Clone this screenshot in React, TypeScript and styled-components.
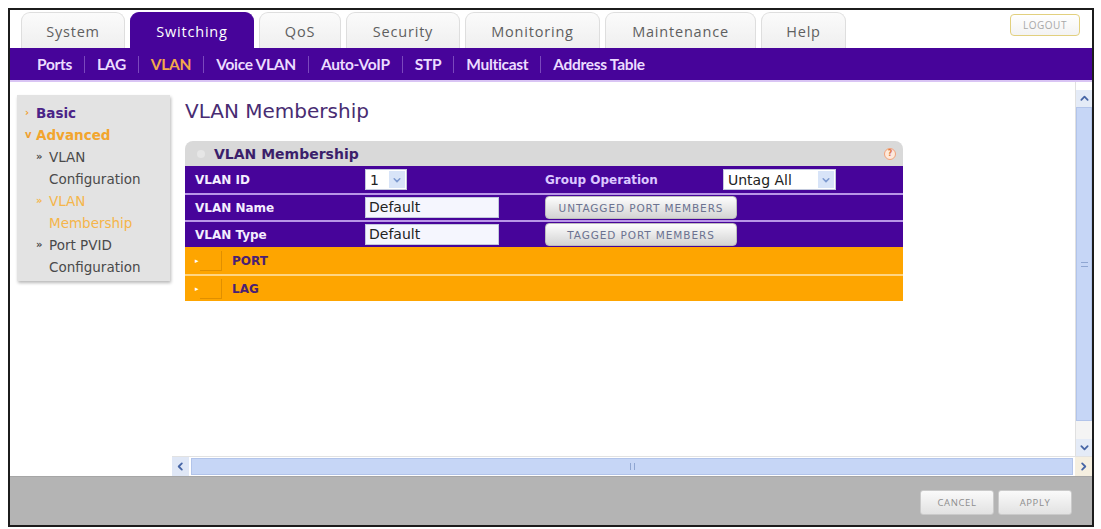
import React from 'react';
import styled, { createGlobalStyle } from 'styled-components';

const PURPLE = '#47049a';
const ORANGE = '#fea500';

const GlobalStyle = createGlobalStyle`
  html, body { margin: 0; padding: 0; background: #fff; }
  body { font-family: "DejaVu Sans", Verdana, sans-serif; }
  * { box-sizing: border-box; }
`;

const Frame = styled.div`
  margin: 8px 0 0 8px;
  width: 1086px;
  height: 519px;
  border: 2px solid #1c1c1c;
  display: flex;
  flex-direction: column;
  background: #fff;
`;

/* top tabs */
const TopBar = styled.div`
  height: 38px;
  display: flex;
  align-items: flex-end;
  gap: 5px;
  padding: 0 12px 0 11px;
`;

const Tab = styled.div<{ $w: number; $active?: boolean }>`
  width: ${p => p.$w}px;
  height: 36px;
  display: flex;
  align-items: center;
  justify-content: center;
  border-radius: 9px 9px 0 0;
  border: 1px solid ${p => (p.$active ? PURPLE : '#dedede')};
  border-bottom: none;
  background: ${p => (p.$active ? PURPLE : 'linear-gradient(#fbfbfb, #efefef)')};
  color: ${p => (p.$active ? '#fff' : '#5f5f5f')};
  font-family: "Open Sans", sans-serif;
  font-size: 14.5px;
  letter-spacing: 0.8px;
  padding-top: 2px;
`;

const Logout = styled.div`
  margin-left: auto;
  align-self: flex-start;
  margin-top: 4px;
  width: 70px;
  height: 22px;
  border: 1px solid #e2d07e;
  border-radius: 4px;
  background: linear-gradient(#ffffff, #f3f3f3);
  color: #a8a8a8;
  font-family: "Open Sans", sans-serif;
  font-size: 10px;
  letter-spacing: 0.5px;
  display: flex;
  align-items: center;
  justify-content: center;
`;

/* sub navigation */
const SubNav = styled.div`
  height: 34px;
  background: ${PURPLE};
  border-bottom: 2px solid #d9c4f4;
  display: flex;
  align-items: center;
  padding-left: 27px;
  font-family: Lato, sans-serif;
  font-weight: 700;
  font-size: 15.5px;
  letter-spacing: -0.3px;
`;

const SubLink = styled.span<{ $active?: boolean }>`
  color: ${p => (p.$active ? '#f3a94a' : '#ecdcff')};
`;

const SubSep = styled.span`
  width: 1px;
  height: 17px;
  margin: 0 12px;
  background: rgba(220, 200, 255, 0.35);
`;

/* body */
const Body = styled.div`
  height: 394px;
  display: grid;
  grid-template-columns: 162px 1fr 17px;
  grid-template-rows: 1fr 20px;
`;

const Sidebar = styled.div`
  grid-row: 1 / 3;
  grid-column: 1;
`;

const NavBox = styled.div`
  margin: 13px 0 0 7px;
  width: 153px;
  height: 186px;
  padding: 7px 0 3px 8px;
  background: #e3e3e3;
  box-shadow: 1px 2px 3px rgba(0, 0, 0, 0.28);
  font-size: 13.5px;
  line-height: 22px;
`;

const NavRow = styled.div<{ $sub?: boolean }>`
  display: flex;
  align-items: flex-start;
  padding-left: ${p => (p.$sub ? 11 : 0)}px;
`;

const Marker = styled.span<{ $color: string; $w: number }>`
  width: ${p => p.$w}px;
  flex: none;
  color: ${p => p.$color};
  font-size: 10px;
  font-weight: 700;
`;

const NavText = styled.div<{ $color: string; $bold?: boolean }>`
  color: ${p => p.$color};
  font-weight: ${p => (p.$bold ? 700 : 400)};
`;

const Content = styled.div`
  grid-row: 1;
  grid-column: 2;
  padding: 17px 0 0 13px;
`;

const Heading = styled.h1`
  margin: 0 0 18px;
  font-size: 20px;
  line-height: 24px;
  font-weight: 400;
  color: #482c72;
`;

const Panel = styled.div`
  width: 718px;
`;

const PanelHead = styled.div`
  height: 25px;
  background: #d9d9d9;
  border-radius: 8px 8px 0 0;
  display: flex;
  align-items: center;
  padding: 0 7px 0 12px;
`;

const FaintDot = styled.span`
  width: 8px;
  height: 8px;
  border-radius: 50%;
  background: #e6e6e6;
  margin-right: 9px;
`;

const PanelTitle = styled.span`
  font-size: 14px;
  font-weight: 700;
  color: #3b1f6b;
`;

const HelpIcon = styled.span`
  margin-left: auto;
  width: 12px;
  height: 12px;
  border-radius: 50%;
  border: 1px solid #f2a27a;
  background: #fde9dc;
  color: #e0784a;
  font-size: 8px;
  font-weight: 700;
  display: flex;
  align-items: center;
  justify-content: center;
`;

const Row = styled.div<{ $tone: 'purple' | 'orange'; $sep?: boolean }>`
  height: 27px;
  display: grid;
  grid-template-columns: 170px 180px 178px 1fr;
  align-items: center;
  padding-left: 10px;
  background: ${p => (p.$tone === 'purple' ? PURPLE : ORANGE)};
  border-top: ${p =>
    p.$sep ? `2px solid ${p.$tone === 'purple' ? '#b996e8' : '#ffd583'}` : 'none'};
`;

const Label = styled.span<{ $dim?: boolean }>`
  font-size: 12px;
  font-weight: 700;
  color: ${p => (p.$dim ? '#dcc8ff' : '#f4eeff')};
`;

const SelectBox = styled.div<{ $w: number }>`
  width: ${p => p.$w}px;
  height: 21px;
  background: #fff;
  border: 1px solid #c3c9dc;
  display: flex;
  align-items: center;
  justify-content: space-between;
  padding-left: 4px;
  font-size: 14px;
  color: #222;
`;

const DropBtn = styled.span`
  width: 16px;
  height: 17px;
  margin-right: 1px;
  background: #d8e4f8;
  display: flex;
  align-items: center;
  justify-content: center;
`;

const TextInput = styled.div`
  width: 134px;
  height: 21px;
  background: #f5f6fe;
  border: 1px solid #c3c9dc;
  padding-left: 3px;
  font-size: 14px;
  line-height: 19px;
  color: #222;
`;

const GreyButton = styled.div`
  width: 192px;
  height: 23px;
  border-radius: 4px;
  background: linear-gradient(#fdfdfd, #e6e6e6 55%, #d4d4d4);
  border: 1px solid #bdbdbd;
  color: #6b7290;
  font-size: 10.5px;
  letter-spacing: 0.9px;
  display: flex;
  align-items: center;
  justify-content: center;
`;

const Expander = styled.span`
  display: flex;
  align-items: center;
`;

const ExpArrow = styled.span`
  width: 5px;
  font-size: 7px;
  color: #fff;
`;

const ExpBox = styled.span`
  width: 22px;
  height: 20px;
  border-right: 1px solid #e08f00;
  border-bottom: 1px solid #e08f00;
  margin-right: 10px;
`;

const SectionName = styled.span`
  font-size: 12px;
  font-weight: 700;
  color: #4a1f73;
`;

/* scrollbars */
const VScroll = styled.div`
  grid-row: 1;
  grid-column: 3;
  display: flex;
  flex-direction: column;
  padding-top: 8px;
  border-left: 1px solid #e0e0e0;
`;

const ScrollBtn = styled.div`
  flex: none;
  width: 100%;
  height: 17px;
  background: #e4ebf7;
  display: flex;
  align-items: center;
  justify-content: center;
`;

const VThumb = styled.div`
  flex: 1;
  background: #c6d6f6;
  border: 1px solid #b2c4ea;
  display: flex;
  align-items: center;
  justify-content: center;
`;

const VTrack = styled.div`
  flex: none;
  height: 18px;
  background: #f4f4f4;
`;

const HScroll = styled.div`
  grid-row: 2;
  grid-column: 2 / 4;
  display: flex;
  align-items: stretch;
  border-top: 1px solid #e2e2e2;
`;

const HBtn = styled.div<{ $bg: string }>`
  width: 17px;
  flex: none;
  background: ${p => p.$bg};
  display: flex;
  align-items: center;
  justify-content: center;
`;

const HThumb = styled.div`
  flex: 1;
  margin: 1px 2px;
  background: #c6d6f6;
  border: 1px solid #b2c4ea;
  display: flex;
  align-items: center;
  justify-content: center;
`;

const Grip = styled.span<{ $vertical?: boolean }>`
  width: ${p => (p.$vertical ? 7 : 5)}px;
  height: ${p => (p.$vertical ? 5 : 7)}px;
  border-${p => (p.$vertical ? 'top' : 'left')}: 1px solid #8fa6d2;
  border-${p => (p.$vertical ? 'bottom' : 'right')}: 1px solid #8fa6d2;
`;

/* footer */
const Footer = styled.div`
  flex: 1;
  background: #b4b4b4;
  border-top: 1px solid #a6a6a6;
  display: flex;
  justify-content: flex-end;
  align-items: flex-start;
  gap: 4px;
  padding: 13px 20px 0 0;
`;

const FootButton = styled.div`
  width: 74px;
  height: 25px;
  border-radius: 3px;
  background: linear-gradient(#fafafa, #e2e2e2);
  border: 1px solid #cacaca;
  color: #8e8e8e;
  font-family: "Open Sans", sans-serif;
  font-size: 9.5px;
  letter-spacing: 0.6px;
  display: flex;
  align-items: center;
  justify-content: center;
`;

type Dir = 'up' | 'down' | 'left' | 'right';
const chevronPaths: Record<Dir, string> = {
  up: 'M1.5 6.5 L5 3 L8.5 6.5',
  down: 'M1.5 3.5 L5 7 L8.5 3.5',
  left: 'M6.5 1.5 L3 5 L6.5 8.5',
  right: 'M3.5 1.5 L7 5 L3.5 8.5',
};

const Chevron = ({ dir, size = 9, color = '#4766a6' }: { dir: Dir; size?: number; color?: string }) => (
  <svg width={size} height={size} viewBox="0 0 10 10">
    <path d={chevronPaths[dir]} fill="none" stroke={color} strokeWidth={2} strokeLinecap="round" strokeLinejoin="round" />
  </svg>
);

const tabs = [
  { name: 'System', w: 104 },
  { name: 'Switching', w: 124, active: true },
  { name: 'QoS', w: 82 },
  { name: 'Security', w: 114 },
  { name: 'Monitoring', w: 135 },
  { name: 'Maintenance', w: 151 },
  { name: 'Help', w: 85 },
];

const subLinks = ['Ports', 'LAG', 'VLAN', 'Voice VLAN', 'Auto-VoIP', 'STP', 'Multicast', 'Address Table'];

const App = () => {
  return (
    <>
      <GlobalStyle />
      <Frame>
        <TopBar>
          {tabs.map(t => (
            <Tab key={t.name} $w={t.w} $active={t.active}>
              {t.name}
            </Tab>
          ))}
          <Logout>LOGOUT</Logout>
        </TopBar>

        <SubNav>
          {subLinks.map((l, i) => (
            <React.Fragment key={l}>
              {i > 0 && <SubSep />}
              <SubLink $active={l === 'VLAN'}>{l}</SubLink>
            </React.Fragment>
          ))}
        </SubNav>

        <Body>
          <Sidebar>
            <NavBox>
              <NavRow>
                <Marker $color="#f0a030" $w={11}>›</Marker>
                <NavText $color="#4b2488" $bold>Basic</NavText>
              </NavRow>
              <NavRow>
                <Marker $color="#f0a030" $w={11}>v</Marker>
                <NavText $color="#f2a52e" $bold>Advanced</NavText>
              </NavRow>
              <NavRow $sub>
                <Marker $color="#4a4a4a" $w={13}>»</Marker>
                <NavText $color="#4a4a4a">VLAN<br />Configuration</NavText>
              </NavRow>
              <NavRow $sub>
                <Marker $color="#f5b54a" $w={13}>»</Marker>
                <NavText $color="#f5b54a">VLAN<br />Membership</NavText>
              </NavRow>
              <NavRow $sub>
                <Marker $color="#4a4a4a" $w={13}>»</Marker>
                <NavText $color="#4a4a4a">Port PVID<br />Configuration</NavText>
              </NavRow>
            </NavBox>
          </Sidebar>

          <Content>
            <Heading>VLAN Membership</Heading>
            <Panel>
              <PanelHead>
                <FaintDot />
                <PanelTitle>VLAN Membership</PanelTitle>
                <HelpIcon>?</HelpIcon>
              </PanelHead>
              <Row $tone="purple">
                <Label>VLAN ID</Label>
                <SelectBox $w={42}>
                  1
                  <DropBtn><Chevron dir="down" size={8} color="#7f9bd0" /></DropBtn>
                </SelectBox>
                <Label $dim>Group Operation</Label>
                <SelectBox $w={113}>
                  Untag All
                  <DropBtn><Chevron dir="down" size={8} color="#7f9bd0" /></DropBtn>
                </SelectBox>
              </Row>
              <Row $tone="purple" $sep>
                <Label>VLAN Name</Label>
                <TextInput>Default</TextInput>
                <GreyButton>UNTAGGED PORT MEMBERS</GreyButton>
                <span />
              </Row>
              <Row $tone="purple" $sep>
                <Label>VLAN Type</Label>
                <TextInput>Default</TextInput>
                <GreyButton>TAGGED PORT MEMBERS</GreyButton>
                <span />
              </Row>
              <Row $tone="orange">
                <Expander>
                  <ExpArrow>▸</ExpArrow>
                  <ExpBox />
                  <SectionName>PORT</SectionName>
                </Expander>
              </Row>
              <Row $tone="orange" $sep>
                <Expander>
                  <ExpArrow>▸</ExpArrow>
                  <ExpBox />
                  <SectionName>LAG</SectionName>
                </Expander>
              </Row>
            </Panel>
          </Content>

          <VScroll>
            <ScrollBtn><Chevron dir="up" /></ScrollBtn>
            <VThumb><Grip $vertical /></VThumb>
            <VTrack />
            <ScrollBtn><Chevron dir="down" /></ScrollBtn>
          </VScroll>

          <HScroll>
            <HBtn $bg="#dfe7f6"><Chevron dir="left" /></HBtn>
            <HThumb><Grip /></HThumb>
            <HBtn $bg="#f5efe0"><Chevron dir="right" /></HBtn>
          </HScroll>
        </Body>

        <Footer>
          <FootButton>CANCEL</FootButton>
          <FootButton>APPLY</FootButton>
        </Footer>
      </Frame>
    </>
  );
};

export default App;
